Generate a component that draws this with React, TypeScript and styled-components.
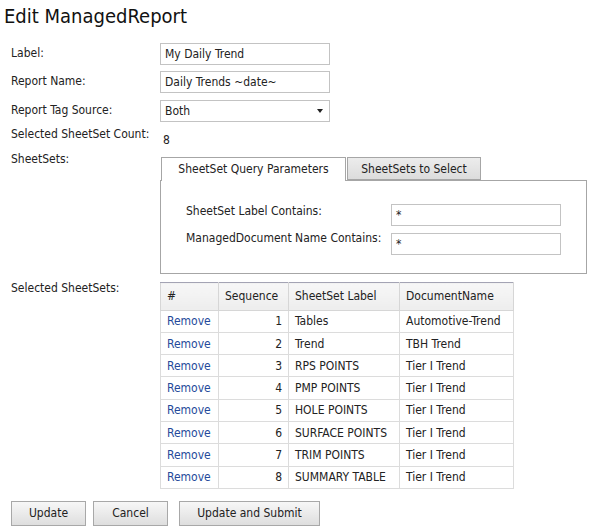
import React from 'react';
import styled, { createGlobalStyle } from 'styled-components';

const GlobalStyle = createGlobalStyle`
  body {
    margin: 0;
    background: #fff;
    font-family: "DejaVu Sans Condensed", "DejaVu Sans", sans-serif;
    font-size: 12px;
    color: #222;
  }
`;

const Page = styled.div`
  width: 595px;
  height: 527px;
  padding: 4px 0 0 4px;
  box-sizing: border-box;
`;

const Title = styled.h1`
  margin: 0 0 15px 0;
  font-family: "DejaVu Sans Condensed", "DejaVu Sans", sans-serif;
  font-size: 20px;
  font-weight: normal;
  line-height: 24px;
  color: #111;
`;

const Form = styled.div`
  padding-left: 7px;
`;

const FieldRow = styled.div<{ $gap?: number; $h?: number }>`
  display: grid;
  grid-template-columns: 149px auto;
  align-items: start;
  margin-bottom: ${p => p.$gap ?? 6}px;
  ${p => (p.$h ? `height: ${p.$h}px;` : '')}
`;

const Label = styled.div<{ $top?: number }>`
  padding-top: ${p => Math.max(p.$top ?? 3, 0)}px;
  margin-top: ${p => Math.min(p.$top ?? 0, 0)}px;
  line-height: 14px;
  white-space: nowrap;
`;

const TextInput = styled.div<{ $width?: number }>`
  width: ${p => p.$width ?? 170}px;
  height: 22px;
  box-sizing: border-box;
  border: 1px solid #c3c3c3;
  padding: 0 0 0 4px;
  line-height: 20px;
  background: #fff;
  white-space: nowrap;
  overflow: hidden;
`;

const Select = styled(TextInput)`
  display: flex;
  align-items: center;
  justify-content: space-between;
  padding-right: 6px;
`;

const Caret = styled.span`
  width: 0;
  height: 0;
  border-left: 3px solid transparent;
  border-right: 3px solid transparent;
  border-top: 4px solid #222;
`;

const Value = styled.div`
  padding: 7px 0 0 3px;
  line-height: 14px;
`;

const Tabs = styled.div`
  padding-top: 11px;
`;

const TabStrip = styled.div`
  display: flex;
  padding-left: 1px;
  align-items: flex-start;
`;

const Tab = styled.div<{ $active?: boolean; $w: number }>`
  width: ${p => p.$w}px;
  height: ${p => (p.$active ? 24 : 23)}px;
  box-sizing: border-box;
  text-align: center;
  line-height: 22px;
  border: 1px solid #a6a6a6;
  border-bottom: ${p => (p.$active ? 'none' : '1px solid #a6a6a6')};
  background: ${p => (p.$active ? '#fff' : 'linear-gradient(#ececec, #dcdcdc)')};
  margin-right: 1px;
  position: relative;
  z-index: 1;
  margin-bottom: -1px;
  white-space: nowrap;
`;

const Panel = styled.div`
  width: 427px;
  height: 94px;
  box-sizing: border-box;
  border: 1px solid #a6a6a6;
  padding: 23px 0 0 25px;
`;

const PanelRow = styled.div`
  display: grid;
  grid-template-columns: 205px auto;
  align-items: start;
  margin-bottom: 7px;
`;

const Table = styled.table`
  border-collapse: collapse;
  table-layout: fixed;
  border: 1px solid #a4a4b4;
  width: 353px;
`;

const Th = styled.th<{ $w: number }>`
  width: ${p => p.$w}px;
  height: 27.6px;
  box-sizing: border-box;
  padding: 0 6px;
  text-align: left;
  font-weight: normal;
  background: linear-gradient(#f7f7f7, #ededed);
  border: 1px solid #d6d6d6;
  border-top-color: #a4a4b4;
  white-space: nowrap;
`;

const Td = styled.td<{ $right?: boolean }>`
  height: 22.3px;
  box-sizing: border-box;
  padding: 0 6px;
  text-align: ${p => (p.$right ? 'right' : 'left')};
  border: 1px solid #dcdcdc;
  white-space: nowrap;
  overflow: hidden;
`;

const Link = styled.a`
  color: #254a9a;
  text-decoration: none;
`;

const Buttons = styled.div`
  display: flex;
  gap: 7px;
  padding: 12px 0 0 7px;
`;

const Button = styled.button<{ $w: number; $ml?: number }>`
  width: ${p => p.$w}px;
  height: 25px;
  margin-left: ${p => p.$ml ?? 0}px;
  font-family: inherit;
  font-size: 12px;
  color: #222;
  border: 1px solid #a8a8a8;
  background: linear-gradient(#f7f7f7, #dedede);
  padding: 0;
`;

const rows = [
  ['Tables', 'Automotive-Trend'],
  ['Trend', 'TBH Trend'],
  ['RPS POINTS', 'Tier I Trend'],
  ['PMP POINTS', 'Tier I Trend'],
  ['HOLE POINTS', 'Tier I Trend'],
  ['SURFACE POINTS', 'Tier I Trend'],
  ['TRIM POINTS', 'Tier I Trend'],
  ['SUMMARY TABLE', 'Tier I Trend'],
];

export default function App() {
  return (
    <Page>
      <GlobalStyle />
      <Title>Edit ManagedReport</Title>
      <Form>
        <FieldRow>
          <Label>Label:</Label>
          <TextInput>My Daily Trend</TextInput>
        </FieldRow>
        <FieldRow $gap={7}>
          <Label>Report Name:</Label>
          <TextInput>Daily Trends ~date~</TextInput>
        </FieldRow>
        <FieldRow $gap={4}>
          <Label>Report Tag Source:</Label>
          <Select>
            <span>Both</span>
            <Caret />
          </Select>
        </FieldRow>
        <FieldRow $gap={0} $h={20}>
          <Label $top={1}>Selected SheetSet Count:</Label>
          <Value>8</Value>
        </FieldRow>
        <FieldRow $gap={8}>
          <Label $top={6}>SheetSets:</Label>
          <Tabs>
            <TabStrip>
              <Tab $active $w={185}>SheetSet Query Parameters</Tab>
              <Tab $w={134}>SheetSets to Select</Tab>
            </TabStrip>
            <Panel>
              <PanelRow>
                <Label $top={0}>SheetSet Label Contains:</Label>
                <TextInput>*</TextInput>
              </PanelRow>
              <PanelRow>
                <Label $top={-2}>ManagedDocument Name Contains:</Label>
                <TextInput>*</TextInput>
              </PanelRow>
            </Panel>
          </Tabs>
        </FieldRow>
        <FieldRow $gap={0}>
          <Label $top={-1}>Selected SheetSets:</Label>
          <Table>
            <thead>
              <tr>
                <Th $w={58}>#</Th>
                <Th $w={70}>Sequence</Th>
                <Th $w={111}>SheetSet Label</Th>
                <Th $w={114}>DocumentName</Th>
              </tr>
            </thead>
            <tbody>
              {rows.map(([label, doc], i) => (
                <tr key={i}>
                  <Td>
                    <Link href="#">Remove</Link>
                  </Td>
                  <Td $right>{i + 1}</Td>
                  <Td>{label}</Td>
                  <Td>{doc}</Td>
                </tr>
              ))}
            </tbody>
          </Table>
        </FieldRow>
      </Form>
      <Buttons>
        <Button $w={75}>Update</Button>
        <Button $w={75}>Cancel</Button>
        <Button $w={141} $ml={4}>Update and Submit</Button>
      </Buttons>
    </Page>
  );
}
